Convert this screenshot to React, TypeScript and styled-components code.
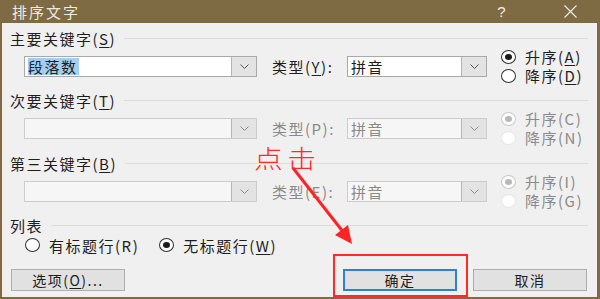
import React from 'react'
import styled, { createGlobalStyle } from 'styled-components'

const GlobalStyle = createGlobalStyle`
    html, body {
        margin: 0;
        padding: 0;
        overflow: hidden;
        background: #f0f0f0;
    }
    body {
        font-family: "Noto Sans CJK SC", "Noto Sans", sans-serif;
    }
`;

type SortRow = {
    title: string;
    mnemonic: string;
    value: string;
    typeKey: string;
    asc: string;
    desc: string;
    enabled: boolean;
    gapTop: number;
};

const rows: SortRow[] = [
    { title: '主要关键字', mnemonic: 'S', value: '段落数', typeKey: 'Y', asc: 'A', desc: 'D', enabled: true, gapTop: 0 },
    { title: '次要关键字', mnemonic: 'T', value: '', typeKey: 'P', asc: 'C', desc: 'N', enabled: false, gapTop: 6 },
    { title: '第三关键字', mnemonic: 'B', value: '', typeKey: 'E', asc: 'I', desc: 'G', enabled: false, gapTop: 7 },
];

const Chevron: React.FC<{ dim?: boolean }> = ({ dim }) => (
    <svg width="9" height="5" viewBox="0 0 9 5">
        <path d="M0.5 0.5 L4.5 4.5 L8.5 0.5" fill="none" stroke={dim ? '#8a8a8a' : '#555'} strokeWidth="1" />
    </svg>
)

// label text with the access key in brackets, underlined where the control is live
const Caption: React.FC<{ text: string; k: string; underline?: boolean; tail?: string }> = ({ text, k, underline, tail }) => (
    <span>{text}({underline ? <U>{k}</U> : k}){tail}</span>
)

const App: React.FC = () => {
    return (
        <>
            <GlobalStyle />
            <Window>
                <TitleBar>
                    <Title>排序文字</Title>
                    <TitleButtons>
                        <Help>?</Help>
                        <svg width="15" height="13" viewBox="0 0 15 13">
                            <path d="M1.5 0.5 L13.5 12.5 M13.5 0.5 L1.5 12.5" stroke="#f2efe8" strokeWidth="1.1" />
                        </svg>
                    </TitleButtons>
                </TitleBar>
                <Content>
                    {rows.map((r) => (
                        <React.Fragment key={r.title}>
                            <Header gapTop={r.gapTop}>
                                <Caption text={r.title} k={r.mnemonic} underline />
                            </Header>
                            <Row>
                                <Combo width={233} disabled={!r.enabled}>
                                    <ComboText>
                                        {r.value && <Selected>{r.value}</Selected>}
                                    </ComboText>
                                    <DropButton><Chevron dim={!r.enabled} /></DropButton>
                                </Combo>
                                <TypeLabel disabled={!r.enabled}>
                                    <Caption text="类型" k={r.typeKey} underline={r.enabled} tail=":" />
                                </TypeLabel>
                                <Combo width={140} disabled={!r.enabled}>
                                    <ComboText disabled={!r.enabled}>拼音</ComboText>
                                    <DropButton><Chevron dim={!r.enabled} /></DropButton>
                                </Combo>
                                <RadioGroup>
                                    <RadioItem disabled={!r.enabled}>
                                        <Radio checked disabled={!r.enabled} />
                                        <Caption text="升序" k={r.asc} underline={r.enabled} />
                                    </RadioItem>
                                    <RadioItem disabled={!r.enabled}>
                                        <Radio disabled={!r.enabled} />
                                        <Caption text="降序" k={r.desc} underline={r.enabled} />
                                    </RadioItem>
                                </RadioGroup>
                            </Row>
                        </React.Fragment>
                    ))}
                    <Header gapTop={6}>列表</Header>
                    <ListRow>
                        <RadioItem>
                            <Radio />
                            <Caption text="有标题行" k="R" />
                        </RadioItem>
                        <RadioItem>
                            <Radio checked />
                            <Caption text="无标题行" k="W" underline />
                        </RadioItem>
                    </ListRow>
                    <ButtonRow>
                        <Button>选项(<U>O</U>)...</Button>
                        <Spacer />
                        <Button primary>确定</Button>
                        <Button>取消</Button>
                    </ButtonRow>
                </Content>
                <RedBox />
                <Callout>点击</Callout>
                <Arrow width="600" height="299" viewBox="0 0 600 299">
                    <line x1="293" y1="168" x2="344" y2="233" stroke="#ff2424" strokeWidth="3" />
                    <polygon points="352,244 335,235 348,225" fill="#ff2424" />
                </Arrow>
            </Window>
        </>
    )
}

const Window = styled.div`
    position: relative;
    box-sizing: border-box;
    width: 600px;
    height: 299px;
    display: flex;
    flex-direction: column;
    background: #f0f0f0;
    border-left: 2px solid #7e6b44;
    border-right: 3px solid #7e6b44;
    border-bottom: 2px solid #7e6b44;
    font-size: 15px;
    letter-spacing: 1.5px;
    color: #1e1e1e;
`;

const TitleBar = styled.div`
    height: 23px;
    margin: 0 -3px 0 -2px;
    padding: 0 22px 0 12px;
    background: #7e6b44;
    display: flex;
    align-items: center;
    justify-content: space-between;
`;

const Title = styled.span`
    color: #eeeae2;
    font-size: 15px;
    letter-spacing: 2px;
`;

const TitleButtons = styled.div`
    display: flex;
    align-items: center;
    gap: 56px;
`;

const Help = styled.span`
    color: #f2efe8;
    font-family: "Liberation Sans", sans-serif;
    font-size: 15px;
`;

const Content = styled.div`
    flex: 1;
    display: flex;
    flex-direction: column;
    padding: 6px 9px 0 8px;
`;

const Header = styled.div<{ gapTop: number }>`
    height: 18px;
    margin-top: ${p => p.gapTop}px;
    display: flex;
    align-items: center;
    white-space: nowrap;
    &::after {
        content: '';
        flex: 1;
        height: 1px;
        margin: 0 0 0 8px;
        background: #dcdcdc;
    }
`;

const U = styled.span`
    text-decoration: underline;
    text-underline-offset: 2px;
`;

const Row = styled.div`
    height: 38px;
    margin-left: 14px;
    display: flex;
    align-items: center;
`;

const Combo = styled.div<{ width: number; disabled?: boolean }>`
    box-sizing: border-box;
    flex: 0 0 ${p => p.width}px;
    height: 21px;
    display: flex;
    border: 1px solid ${p => (p.disabled ? '#cccccc' : '#a9a9a9')};
    background: ${p => (p.disabled ? '#f6f6f6' : '#ffffff')};
`;

const ComboText = styled.div<{ disabled?: boolean }>`
    flex: 1;
    display: flex;
    align-items: center;
    padding-left: 3px;
    color: ${p => (p.disabled ? '#8a8a8a' : '#1e1e1e')};
    line-height: 17px;
`;

const Selected = styled.span`
    background: #a3cff4;
    padding-right: 1px;
`;

const DropButton = styled.div`
    width: 24px;
    display: flex;
    align-items: center;
    justify-content: center;
    background: #e3e3e3;
    border-left: 1px solid #b4b4b4;
`;

const TypeLabel = styled.div<{ disabled?: boolean }>`
    flex: 0 0 75px;
    margin-left: 15px;
    color: ${p => (p.disabled ? '#8a8a8a' : '#1e1e1e')};
    white-space: nowrap;
`;

const RadioGroup = styled.div`
    flex: 0 0 auto;
    margin-left: 14px;
    display: flex;
    flex-direction: column;
`;

const RadioItem = styled.label<{ disabled?: boolean }>`
    height: 19px;
    display: flex;
    align-items: center;
    gap: 9px;
    white-space: nowrap;
    color: ${p => (p.disabled ? '#8a8a8a' : '#1e1e1e')};
`;

const Radio = styled.span<{ checked?: boolean; disabled?: boolean }>`
    box-sizing: border-box;
    flex: 0 0 15px;
    height: 14px;
    border-radius: 50%;
    background: #ffffff;
    border: 1px solid ${p => (p.disabled ? (p.checked ? '#c8c8c8' : '#e6e6e6') : '#333333')};
    display: flex;
    align-items: center;
    justify-content: center;
    &::after {
        content: '';
        display: ${p => (p.checked ? 'block' : 'none')};
        width: 7px;
        height: 6px;
        border-radius: 50%;
        background: ${p => (p.disabled ? '#b8b8b8' : '#1a1a1a')};
    }
`;

const ListRow = styled.div`
    height: 18px;
    margin: 2px 0 0 15px;
    display: flex;
    align-items: center;
    gap: 20px;
`;

const ButtonRow = styled.div`
    margin: 15px 1px 0 1px;
    display: flex;
    gap: 16px;
`;

const Spacer = styled.div`
    flex: 1;
`;

const Button = styled.div<{ primary?: boolean }>`
    box-sizing: border-box;
    width: 114px;
    height: 22px;
    display: flex;
    align-items: center;
    justify-content: center;
    background: #e1e1e1;
    border: ${p => (p.primary ? '2px solid #2f7fd8' : '1px solid #adadad')};
    font-size: 14px;
`;

const RedBox = styled.div`
    position: absolute;
    left: 331px;
    top: 254px;
    box-sizing: border-box;
    width: 135px;
    height: 43px;
    border: 2px solid #ff2a2a;
`;

const Callout = styled.div`
    position: absolute;
    left: 252px;
    top: 143px;
    color: #ff2a2a;
    font-size: 25px;
    font-weight: 300;
    letter-spacing: 4px;
    line-height: 28px;
    transform: scaleX(1.15);
    transform-origin: left center;
    white-space: nowrap;
`;

const Arrow = styled.svg`
    position: absolute;
    left: -2px;
    top: 0;
    pointer-events: none;
`;

export default App
